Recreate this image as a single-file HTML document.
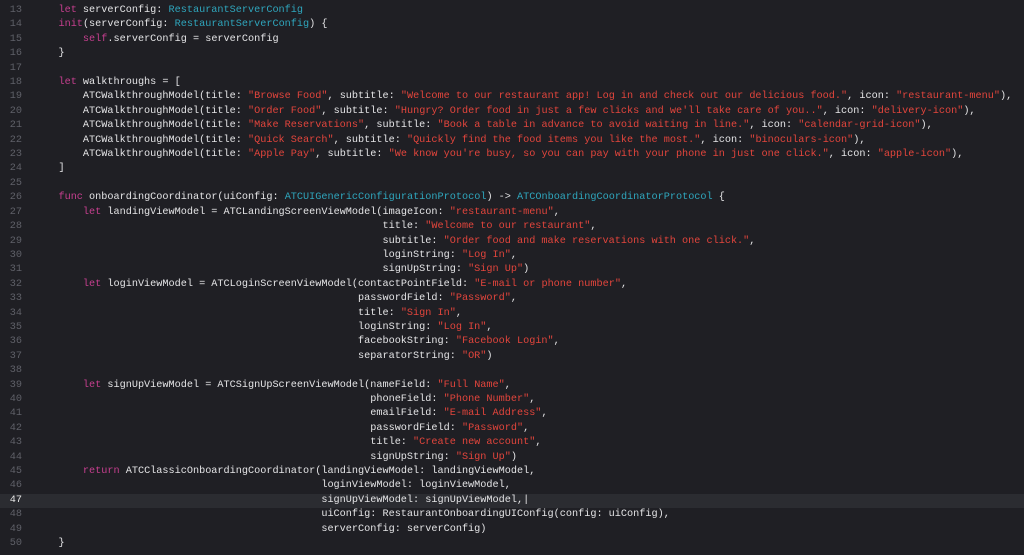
<!DOCTYPE html>
<html><head><meta charset="utf-8"><style>
html,body{margin:0;padding:0;background:#1f1f24;width:1024px;height:555px;overflow:hidden}
.wrap{position:relative;padding-top:4px}
.l{position:relative;height:14.42px;line-height:14.42px;font-family:"Liberation Mono",monospace;font-size:10.2px;white-space:pre;color:#e4e4e6}
.n{position:absolute;left:0;width:22px;text-align:right;color:#5f6068}
.c{position:absolute;left:34px}
.k{color:#c63f8f}.t{color:#2fa6bd}.s{color:#e2453c}
.hl{background:#2b2c31}
.hl .n{color:#e8e8e8}
</style></head><body><div class="wrap">
<div class="l"><span class="n">13</span><span class="c">    <span class="k">let</span> serverConfig: <span class="t">RestaurantServerConfig</span></span></div>
<div class="l"><span class="n">14</span><span class="c">    <span class="k">init</span>(serverConfig: <span class="t">RestaurantServerConfig</span>) {</span></div>
<div class="l"><span class="n">15</span><span class="c">        <span class="k">self</span>.serverConfig = serverConfig</span></div>
<div class="l"><span class="n">16</span><span class="c">    }</span></div>
<div class="l"><span class="n">17</span><span class="c"></span></div>
<div class="l"><span class="n">18</span><span class="c">    <span class="k">let</span> walkthroughs = [</span></div>
<div class="l"><span class="n">19</span><span class="c">        ATCWalkthroughModel(title: <span class="s">"Browse Food"</span>, subtitle: <span class="s">"Welcome to our restaurant app! Log in and check out our delicious food."</span>, icon: <span class="s">"restaurant-menu"</span>),</span></div>
<div class="l"><span class="n">20</span><span class="c">        ATCWalkthroughModel(title: <span class="s">"Order Food"</span>, subtitle: <span class="s">"Hungry? Order food in just a few clicks and we'll take care of you.."</span>, icon: <span class="s">"delivery-icon"</span>),</span></div>
<div class="l"><span class="n">21</span><span class="c">        ATCWalkthroughModel(title: <span class="s">"Make Reservations"</span>, subtitle: <span class="s">"Book a table in advance to avoid waiting in line."</span>, icon: <span class="s">"calendar-grid-icon"</span>),</span></div>
<div class="l"><span class="n">22</span><span class="c">        ATCWalkthroughModel(title: <span class="s">"Quick Search"</span>, subtitle: <span class="s">"Quickly find the food items you like the most."</span>, icon: <span class="s">"binoculars-icon"</span>),</span></div>
<div class="l"><span class="n">23</span><span class="c">        ATCWalkthroughModel(title: <span class="s">"Apple Pay"</span>, subtitle: <span class="s">"We know you're busy, so you can pay with your phone in just one click."</span>, icon: <span class="s">"apple-icon"</span>),</span></div>
<div class="l"><span class="n">24</span><span class="c">    ]</span></div>
<div class="l"><span class="n">25</span><span class="c"></span></div>
<div class="l"><span class="n">26</span><span class="c">    <span class="k">func</span> onboardingCoordinator(uiConfig: <span class="t">ATCUIGenericConfigurationProtocol</span>) -&gt; <span class="t">ATCOnboardingCoordinatorProtocol</span> {</span></div>
<div class="l"><span class="n">27</span><span class="c">        <span class="k">let</span> landingViewModel = ATCLandingScreenViewModel(imageIcon: <span class="s">"restaurant-menu"</span>,</span></div>
<div class="l"><span class="n">28</span><span class="c">                                                         title: <span class="s">"Welcome to our restaurant"</span>,</span></div>
<div class="l"><span class="n">29</span><span class="c">                                                         subtitle: <span class="s">"Order food and make reservations with one click."</span>,</span></div>
<div class="l"><span class="n">30</span><span class="c">                                                         loginString: <span class="s">"Log In"</span>,</span></div>
<div class="l"><span class="n">31</span><span class="c">                                                         signUpString: <span class="s">"Sign Up"</span>)</span></div>
<div class="l"><span class="n">32</span><span class="c">        <span class="k">let</span> loginViewModel = ATCLoginScreenViewModel(contactPointField: <span class="s">"E-mail or phone number"</span>,</span></div>
<div class="l"><span class="n">33</span><span class="c">                                                     passwordField: <span class="s">"Password"</span>,</span></div>
<div class="l"><span class="n">34</span><span class="c">                                                     title: <span class="s">"Sign In"</span>,</span></div>
<div class="l"><span class="n">35</span><span class="c">                                                     loginString: <span class="s">"Log In"</span>,</span></div>
<div class="l"><span class="n">36</span><span class="c">                                                     facebookString: <span class="s">"Facebook Login"</span>,</span></div>
<div class="l"><span class="n">37</span><span class="c">                                                     separatorString: <span class="s">"OR"</span>)</span></div>
<div class="l"><span class="n">38</span><span class="c"></span></div>
<div class="l"><span class="n">39</span><span class="c">        <span class="k">let</span> signUpViewModel = ATCSignUpScreenViewModel(nameField: <span class="s">"Full Name"</span>,</span></div>
<div class="l"><span class="n">40</span><span class="c">                                                       phoneField: <span class="s">"Phone Number"</span>,</span></div>
<div class="l"><span class="n">41</span><span class="c">                                                       emailField: <span class="s">"E-mail Address"</span>,</span></div>
<div class="l"><span class="n">42</span><span class="c">                                                       passwordField: <span class="s">"Password"</span>,</span></div>
<div class="l"><span class="n">43</span><span class="c">                                                       title: <span class="s">"Create new account"</span>,</span></div>
<div class="l"><span class="n">44</span><span class="c">                                                       signUpString: <span class="s">"Sign Up"</span>)</span></div>
<div class="l"><span class="n">45</span><span class="c">        <span class="k">return</span> ATCClassicOnboardingCoordinator(landingViewModel: landingViewModel,</span></div>
<div class="l"><span class="n">46</span><span class="c">                                               loginViewModel: loginViewModel,</span></div>
<div class="l hl"><span class="n">47</span><span class="c">                                               signUpViewModel: signUpViewModel,|</span></div>
<div class="l"><span class="n">48</span><span class="c">                                               uiConfig: RestaurantOnboardingUIConfig(config: uiConfig),</span></div>
<div class="l"><span class="n">49</span><span class="c">                                               serverConfig: serverConfig)</span></div>
<div class="l"><span class="n">50</span><span class="c">    }</span></div>
</div></body></html>
